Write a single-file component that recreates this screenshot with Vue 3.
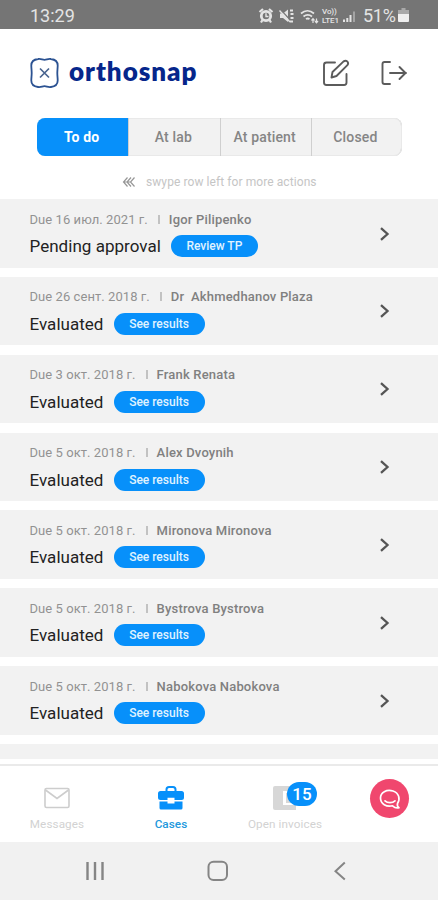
<script setup>
const tabs = ['To do', 'At lab', 'At patient', 'Closed']
const cases = [
  { due: 'Due 16 июл. 2021 г.', name: 'Igor Pilipenko', status: 'Pending approval', action: 'Review TP' },
  { due: 'Due 26 сент. 2018 г.', name: 'Dr  Akhmedhanov Plaza', status: 'Evaluated', action: 'See results' },
  { due: 'Due 3 окт. 2018 г.', name: 'Frank Renata', status: 'Evaluated', action: 'See results' },
  { due: 'Due 5 окт. 2018 г.', name: 'Alex Dvoynih', status: 'Evaluated', action: 'See results' },
  { due: 'Due 5 окт. 2018 г.', name: 'Mironova Mironova', status: 'Evaluated', action: 'See results' },
  { due: 'Due 5 окт. 2018 г.', name: 'Bystrova Bystrova', status: 'Evaluated', action: 'See results' },
  { due: 'Due 5 окт. 2018 г.', name: 'Nabokova Nabokova', status: 'Evaluated', action: 'See results' },
]
</script>

<template>
  <div class="screen">
    <div class="status">
      <span class="clock">13:29</span>
      <svg class="status-icons" width="62" height="20" viewBox="0 0 62 20" fill="none" stroke="#e4e4e4">
        <circle cx="8" cy="10" r="4.700" stroke-width="2.800" />
        <path d="M1.500 6 5 3M14.500 6 11 3M4.500 14 3 16.500M11.500 14 13 16.500" stroke-width="2.200" />
        <path d="M8 7.300v3.200h2.500" stroke-width="1.400" />
        <path d="M22 7.500h3l5-4v12.500l-5-4h-3z" fill="#e4e4e4" stroke="none" />
        <path d="M22.500 3.500 34 16" stroke="#777" stroke-width="1.300" />
        <path d="M21.500 4.500 32 16" stroke-width="1.400" />
        <path d="M32 4.500h3M32.500 8h3M32.500 12h3M32 15.500h3" stroke-width="1.800" />
        <path d="M43 7.500c4-3.500 9-3.500 13 0M45.500 10.500c2.500-2 6-2 8.500 0M48 13.200c1-.8 2.500-.8 3.500 0" stroke-width="1.700" />
        <path d="M55 17v-4M53.500 14.500 55 12.700l1.500 1.800M58.500 12.500v4M57 15l1.500 1.800 1.500-1.800" stroke-width="1.200" />
      </svg>
      <span class="volte"><i>Vo))</i><i>LTE1</i></span>
      <svg width="14" height="20" viewBox="0 0 14 20" stroke="#e4e4e4"><path d="M2 16v-2.500M5.300 16v-4M8.500 16V9" stroke-width="2" /><path d="M12 16V5.500" stroke="#aaa" stroke-width="1.800" /></svg>
      <span class="percent">51%</span>
      <svg class="battery" width="11" height="15" viewBox="0 0 11 15"><path d="M3.500 0h4v2H11v5H0V2h3.500z" fill="#a9a9a9" /><path d="M0 6h11v7q0 1-1 1H1q-1 0-1-1z" fill="#efefef" /></svg>
    </div>

    <header class="header">
      <svg class="logo" width="31" height="32" viewBox="0 0 31 32" fill="none">
        <path d="M9 2C12 1.500 13.300 2.800 15.500 2.800S19 1.500 22 2c4 .5 6.700 3 6.700 6.500 0 2.600-.4 4.700-.4 7.500s.4 4.900.4 7.500c0 3.500-2.700 6-6.700 6.500-3 .5-4.300-.8-6.500-.8s-3.500 1.300-6.500.8c-4-.5-6.700-3-6.700-6.500 0-2.600.4-4.700.4-7.500s-.4-4.900-.4-7.500C2.300 5 5 2.500 9 2z" stroke="#2b5292" stroke-width="1.800" />
        <path d="m11 11.500 9 9m0-9-9 9" stroke="#49648f" stroke-width="1.700" />
      </svg>
      <span class="brand">orthosnap</span>
      <svg class="edit" width="28" height="28" viewBox="0 0 28 28" fill="none" stroke="#5b5b5b" stroke-width="1.900" stroke-linecap="round" stroke-linejoin="round">
        <path d="M13 3.500H4.500Q2 3.500 2 6v17.500Q2 26 4.500 26H22q2.500 0 2.500-2.500V15" />
        <path d="m9.500 18.500 1-5.500L21.600 2.400q2-1.400 3.600 0 1.700 1.800.2 3.800L14.500 17z" />
      </svg>
      <svg class="logout" width="26" height="26" viewBox="0 0 26 26" fill="none" stroke="#5b5b5b" stroke-width="1.900" stroke-linecap="round" stroke-linejoin="round">
        <path d="M9 2H3.500Q1.500 2 1.500 4v18q0 2 2 2H9M9 13h16M18.500 7l6 6-6 6" />
      </svg>
    </header>

    <nav class="tabs">
      <span v-for="(t, i) in tabs" :key="t" class="tab" :class="{ active: i === 0 }">{{ t }}</span>
    </nav>

    <p class="hint">
      <svg width="14" height="12" viewBox="0 0 14 12" fill="none" stroke="#979797"><path d="m5.500 1.500-4 4.500 4 4.500M9 1.500 5 6l4 4.500M12.500 1.500l-4 4.500 4 4.500M2 6h7" stroke-width="1.200" /></svg>
      <span>swype row left for more actions</span>
    </p>

    <main class="list">
      <article v-for="(c, i) in cases" :key="i" class="case">
        <div class="info">
          <div class="meta"><span class="due">{{ c.due }}</span><i class="bar"></i><b class="name">{{ c.name }}</b></div>
          <div class="state"><span class="label">{{ c.status }}</span><span class="pill" :class="{ review: i === 0 }">{{ c.action }}</span></div>
        </div>
        <svg class="chevron" width="12" height="16" viewBox="0 0 12 16" fill="none" stroke="#555" stroke-width="2.300"><path d="m2 2.200 6.500 5.800L2 13.800" /></svg>
      </article>
      <div class="case partial"></div>
    </main>

    <nav class="bottom">
      <div class="item messages">
        <svg width="26" height="22" viewBox="0 0 26 22" fill="none" stroke="#cdcdcd" stroke-width="1.600"><rect x="1" y="1.500" width="24" height="19" rx="1.500" /><path d="m1.500 3 11.500 8.500L24.500 3" /></svg>
        <span>Messages</span>
      </div>
      <div class="item work">
        <svg width="26" height="24" viewBox="0 0 26 24"><path d="M8.500 5V3.500Q8.500 1 11 1h4q2.500 0 2.500 2.500V5" fill="none" stroke="#0790fa" stroke-width="2" /><path d="M2.500 5h21Q26 5 26 7.500v4q0 2.500-2.500 2.500h-7v-2.200h-7V14h-7Q0 14 0 11.500v-4Q0 5 2.500 5zM1.500 15.500h8v2h7v-2h8V22q0 1.500-1.500 1.500H3Q1.500 23.500 1.500 22z" fill="#0790fa" /><path d="M10.500 12h5v4.500h-5z" fill="#fff" /></svg>
        <span>Cases</span>
      </div>
      <div class="item invoices">
        <svg width="25" height="24" viewBox="0 0 25 24"><path d="M2 0h21v24H2q-2 0-2-2V2q0-2 2-2z" fill="#d7d7d7" /><path d="M10 5h13v14H10z" fill="#fff" /><path d="M13 7h10v10H13z" fill="#d7d7d7" /></svg>
        <b class="badge">15</b>
        <span>Open invoices</span>
      </div>
      <div class="chat">
        <svg width="24" height="22" viewBox="0 0 24 22" fill="none" stroke="#fff" stroke-width="1.700" stroke-linecap="round" stroke-linejoin="round"><path d="M19.500 15.500c3-4.500 1.500-10.500-4.500-12.500-6.500-2-12.500 1.500-12.500 7 0 6 6 9.300 12 7.800 1.800 1.700 4.500 2.500 6.500 1.900-1.500-.9-1.900-2.400-1.500-4.200z" /><path d="M7 12.800c2.500 2.500 7.500 2.500 10 0" /></svg>
      </div>
    </nav>

    <footer class="system">
      <svg width="20" height="20" viewBox="0 0 20 20" stroke="#858585" stroke-width="2.400"><path d="M2.500 1v18M10 1v18M17.500 1v18" /></svg>
      <svg class="home" width="22" height="22" viewBox="0 0 22 22" fill="none" stroke="#858585" stroke-width="2"><rect x="1.500" y="1.800" width="18.500" height="18.200" rx="5" /></svg>
      <svg width="13" height="20" viewBox="0 0 13 20" fill="none" stroke="#858585" stroke-width="2"><path d="m11.800 1.500-9.300 8.700 9.300 8.300" /></svg>
    </footer>
  </div>
</template>

<style>
body { margin: 0; background: #fff; }
</style>
<style scoped>
* { box-sizing: border-box; }
i { font-style: normal; }
svg { display: block; flex: none; }
.screen { width: 438px; height: 900px; display: flex; flex-direction: column; overflow: hidden; background: #fff; font-family: Roboto, "Liberation Sans", sans-serif; white-space: pre; }
.status { height: 29px; flex: none; display: flex; align-items: center; padding: 2px 28px 0 30px; background: #757575; color: #e4e4e4; }
.clock { font-size: 18px; line-height: 24px; width: 45px; }
.status-icons { margin-left: 183px; }
.volte { display: flex; flex-direction: column; width: 22px; padding-left: 2px; font-size: 8px; line-height: 9px; font-weight: 500; letter-spacing: -.1px; }
.percent { margin-left: 7px; width: 34px; font-size: 18px; line-height: 24px; letter-spacing: -.3px; }
.battery { margin-left: 1px; }
.header { height: 89px; flex: none; display: flex; align-items: center; padding: 0 30px 0 29px; }
.logo { margin-top: -1px; }
.brand { margin: -5px 0 0 9px; width: 129px; font-family: Lato, sans-serif; font-weight: 800; font-size: 26px; line-height: 32px; letter-spacing: .95px; color: #06268b; }
.edit { margin: -1px 0 0 124px; }
.logout { margin: -1px 0 0 31px; }
.tabs { display: grid; grid-template-columns: repeat(4, 1fr); flex: none; width: 365px; height: 38px; margin-left: 37px; border-radius: 8px; overflow: hidden; background: #f2f2f2; box-shadow: inset 0 0 0 1px #e9e9e9, inset -1px 0 0 #ccc; }
.tab { display: flex; align-items: center; justify-content: center; padding-right: 2px; font-weight: 500; font-size: 14px; letter-spacing: .15px; color: #858585; border-left: 1px solid #cfcfcf; }
.tab:last-child { padding-right: 3px; }
.tab.active { color: #fff; background: #0790fa; border: 0; font-weight: 700; }
.hint { display: flex; flex: none; align-items: flex-start; gap: 10px; height: 42px; margin: 0; padding: 18px 0 0 122px; color: #c5c5c5; font-size: 12px; line-height: 16px; letter-spacing: .08px; }
.hint svg { margin-top: 2px; }
.list { height: 566px; flex: none; overflow: hidden; padding-top: 1px; }
.case { height: 68.500px; margin-bottom: 9.350px; display: flex; justify-content: space-between; padding: 11px 47px 0 29.500px; background: #f2f2f2; }
.meta { display: flex; align-items: center; height: 18px; font-size: 13px; color: #929292; }
.due { letter-spacing: .06px; }
.bar { width: 2px; height: 9px; margin: 0 9px 0 10px; background: #c2c2c2; }
.name { font-weight: 500; color: #808080; letter-spacing: .18px; }
.state { display: flex; align-items: center; height: 22px; margin-top: 7px; gap: 10px; }
.label { font-size: 17px; line-height: 22px; color: #222; letter-spacing: .03px; }
.pill { height: 22px; width: 91px; border-radius: 11px; background: #0790fa; color: #e0f3ff; font-size: 12px; line-height: 22px; text-align: center; font-weight: 500; }
.pill.review { width: 87px; }
.chevron { margin-top: 15.500px; }
.partial { height: 15px; margin: 0; }
.bottom { height: 78px; flex: none; display: flex; align-items: flex-start; border-top: 2px solid #eaeaea; background: #fff; }
.item { position: relative; display: flex; flex-direction: column; align-items: center; width: 114px; height: 75px; padding-top: 20px; font-size: 11.700px; line-height: 14px; color: #d2d2d2; }
.item span { margin-top: 7px; letter-spacing: .1px; }
.item.messages svg { margin: 1px 0; }
.work span { color: #2298dc; font-weight: 500; }
.badge { position: absolute; left: 59px; top: 16px; width: 30px; height: 24px; border-radius: 12px; background: #0790fa; color: #fff; font-size: 17px; line-height: 24px; text-align: center; font-weight: 500; }
.chat { display: flex; align-items: center; justify-content: center; width: 39px; height: 39px; margin: 13px 0 0 28px; border-radius: 50%; background: #f0476e; }
.system { flex: 1; display: flex; justify-content: space-between; align-items: center; padding: 0 92px 0 85px; background: #f1f1f1; }
.home { margin-left: -2px; }
</style>
